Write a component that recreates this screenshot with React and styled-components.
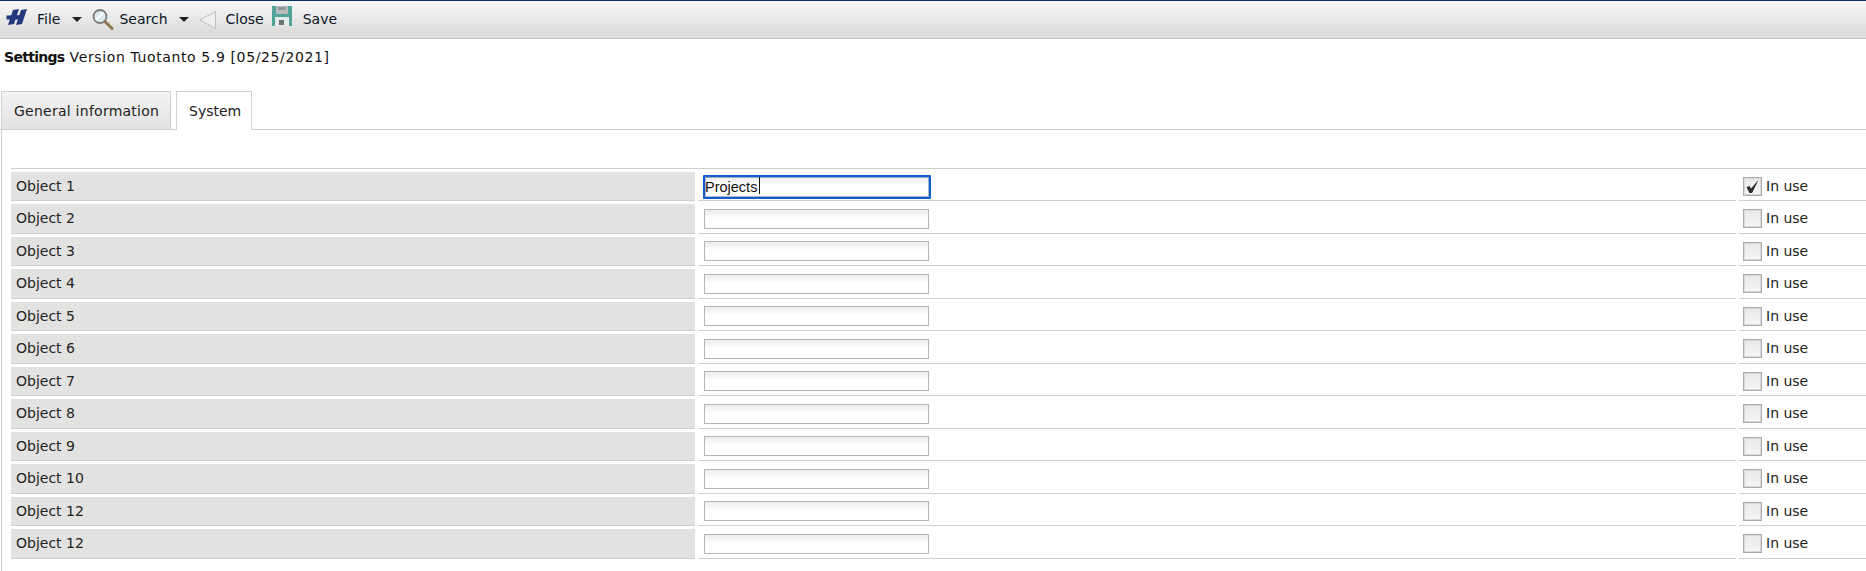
import React from 'react'
import styled, { createGlobalStyle } from 'styled-components'

const GlobalStyle = createGlobalStyle`
  html, body {
    margin: 0;
    padding: 0;
    background: #fff;
    overflow: hidden;
  }
  body {
    font-family: "DejaVu Sans", sans-serif;
    font-size: 14px;
    color: #222;
  }
`

const Page = styled.div`
  width: 1866px;
  height: 571px;
  overflow: hidden;
  display: flex;
  flex-direction: column;
`

const Toolbar = styled.div`
  height: 39px;
  flex-shrink: 0;
  box-sizing: border-box;
  display: flex;
  align-items: center;
  padding-left: 6px;
  border-top: 1px solid #0a2f6a;
  border-bottom: 1px solid #c2c2c2;
  background: linear-gradient(#f8f8f8, #dcdcdc 85%);
`

const ToolItem = styled.span`
  display: inline-flex;
  align-items: center;
  margin-left: ${props => props.$gap || 0}px;
  margin-bottom: ${props => props.$lift || 0}px;
  color: #0b1526;
`

const Caret = styled.span`
  width: 0;
  height: 0;
  margin-left: ${props => props.$gap}px;
  border-left: 5px solid transparent;
  border-right: 5px solid transparent;
  border-top: 5px solid #222;
`

const Title = styled.div`
  height: 37px;
  box-sizing: border-box;
  padding: 10px 0 0 4px;
  line-height: 16px;
  flex-shrink: 0;
  color: #111;
  letter-spacing: 0.62px;
  white-space: pre;

  b {
    font-weight: 700;
    letter-spacing: -0.7px;
  }
`

const Tabs = styled.div`
  display: flex;
  align-items: flex-start;
  height: 39px;
  margin-top: 15px;
  padding-left: 1px;
  flex-shrink: 0;
  box-sizing: border-box;
  border-bottom: 1px solid #cfcfcf;
`

const Tab = styled.div`
  box-sizing: border-box;
  height: ${props => (props.$active ? 39 : 38)}px;
  width: ${props => props.$width}px;
  margin-right: 5px;
  padding-left: ${props => props.$pad}px;
  line-height: 39px;
  letter-spacing: ${props => props.$spacing || 0}px;
  border: 1px solid #cfcfcf;
  border-bottom: none;
  background: ${props => (props.$active ? '#fff' : 'linear-gradient(#f3f3f3, #e2e2e2)')};
`

const Panel = styled.div`
  flex: 1;
  border-left: 1px solid #cfcfcf;
  margin-left: 1px;
  padding: 37.75px 0 0 9px;
`

const Table = styled.div`
  border-top: 1px solid #cfcfcf;
`

const Row = styled.div`
  display: grid;
  grid-template-columns: 684px 1038px 1fr;
  column-gap: 3px;
  height: 32.5px;
  box-sizing: border-box;
  padding-top: 3px;
`

const Label = styled.div`
  background: #e2e2e0;
  border-bottom: 1px solid #cfcfcf;
  padding-left: 5px;
  line-height: 28px;
`

const InputCell = styled.div`
  position: relative;
  min-height: 0;
  border-bottom: 1px solid #cfcfcf;
  padding: 4.5px 0 0 6px;
`

const TextBox = styled.input`
  display: block;
  box-sizing: border-box;
  width: 225px;
  height: 20px;
  padding: 0 1px;
  border: 1px solid #b5b5b5;
  outline: none;
  background: linear-gradient(#ececec, #fff 45%);
  font-family: "Liberation Sans", sans-serif;
  font-size: 14.5px;
  color: #111;

  &.focused {
    width: 228px;
    height: 24px;
    margin: -1.5px 0 -3px -1px;
    padding: 0;
    border: 2px solid #0f5fd0;
    border-radius: 1px;
    box-shadow: inset 0 0 0 1px rgba(20, 50, 100, 0.35);
  }
`

const TextCursor = styled.span`
  position: absolute;
  left: 61px;
  top: 5px;
  width: 1px;
  height: 17px;
  background: #111;
`

const UseCell = styled.div`
  border-bottom: 1px solid #cfcfcf;
  display: flex;
  align-items: flex-start;
  padding: 5px 0 0 4px;
  line-height: 18px;
`

const CheckBox = styled.span`
  width: 19px;
  height: 19px;
  flex-shrink: 0;
  box-sizing: border-box;
  margin-right: 4px;
  border: 1px solid #aaa;
  box-shadow: inset 0 0 0 1px #d8d8d8;
  background: linear-gradient(#e8e8e8, #f6f6f6);
  display: flex;
  align-items: center;
  justify-content: center;
`

const HLogo = () => (
  <svg width="21" height="16" viewBox="0 0 21 16">
    <g fill="#24397c">
      <path d="M7 1 L13 0 L8 15 L2 16 Z" />
      <path d="M15 1 L21 0 L16 15 L10 16 Z" />
      <path d="M0.5 6.5 L18 6 L17 10.5 L0.5 10.5 Z" />
    </g>
  </svg>
)

const SearchIcon = () => (
  <svg width="22" height="21" viewBox="0 0 22 21">
    <circle cx="8" cy="7.5" r="6.5" fill="#d7e8ec" stroke="#7c7c78" strokeWidth="1.8" />
    <path d="M4 11 L11.5 3.5" stroke="#fff" strokeWidth="2" />
    <path d="M13 12.5 L20 19.5" stroke="#8d7350" strokeWidth="3" strokeLinecap="round" />
  </svg>
)

const BackIcon = () => (
  <svg width="17" height="18" viewBox="0 0 17 18">
    <path d="M16.5 0.5 L16.5 17.5 L0.8 9 Z" fill="#efefef" stroke="#bdbdbd" strokeWidth="1" />
  </svg>
)

const SaveIcon = () => (
  <svg width="20" height="20" viewBox="0 0 20 20">
    <rect width="20" height="20" fill="#4fa39a" />
    <rect x="4" y="0" width="12" height="8" fill="#b8bcbc" />
    <rect x="6" y="1" width="8" height="3" fill="#8f9a98" />
    <rect x="3" y="11" width="14" height="9" fill="#e6eaea" />
    <rect x="7" y="14" width="5" height="5" fill="#667573" />
  </svg>
)

const Check = () => (
  <svg width="15" height="15" viewBox="0 0 15 15">
    <path d="M1.5 8 L4.5 7 L6 9.5 L13.5 1 L7 14 L4.4 14 Z" fill="#2a2a2a" />
  </svg>
)

const rows = ['Object 1', 'Object 2', 'Object 3', 'Object 4', 'Object 5', 'Object 6', 'Object 7', 'Object 8', 'Object 9', 'Object 10', 'Object 12', 'Object 12']

const App = () => (
  <Page>
    <GlobalStyle />
    <Toolbar>
      <ToolItem $lift={5}><HLogo /></ToolItem>
      <ToolItem $gap={10} $lift={2}>File</ToolItem>
      <Caret $gap={12} />
      <ToolItem $gap={10}><SearchIcon /></ToolItem>
      <ToolItem $gap={5} $lift={2}>Search</ToolItem>
      <Caret $gap={11} />
      <ToolItem $gap={10}><BackIcon /></ToolItem>
      <ToolItem $gap={10} $lift={2}>Close</ToolItem>
      <ToolItem $gap={8} $lift={7}><SaveIcon /></ToolItem>
      <ToolItem $gap={11} $lift={2}>Save</ToolItem>
    </Toolbar>
    <Title><b>Settings</b> Version Tuotanto 5.9 [05/25/2021]</Title>
    <Tabs>
      <Tab $width={170} $pad={12} $spacing={0.25}>General information</Tab>
      <Tab $active $width={76} $pad={12}>System</Tab>
    </Tabs>
    <Panel>
      <Table>
        {rows.map((name, i) => (
          <Row key={i}>
            <Label>{name}</Label>
            <InputCell>
              <TextBox className={i === 0 ? 'focused' : ''} defaultValue={i === 0 ? 'Projects' : ''} />
              {i === 0 && <TextCursor />}
            </InputCell>
            <UseCell>
              <CheckBox>{i === 0 && <Check />}</CheckBox>
              In use
            </UseCell>
          </Row>
        ))}
      </Table>
    </Panel>
  </Page>
)

export default App
